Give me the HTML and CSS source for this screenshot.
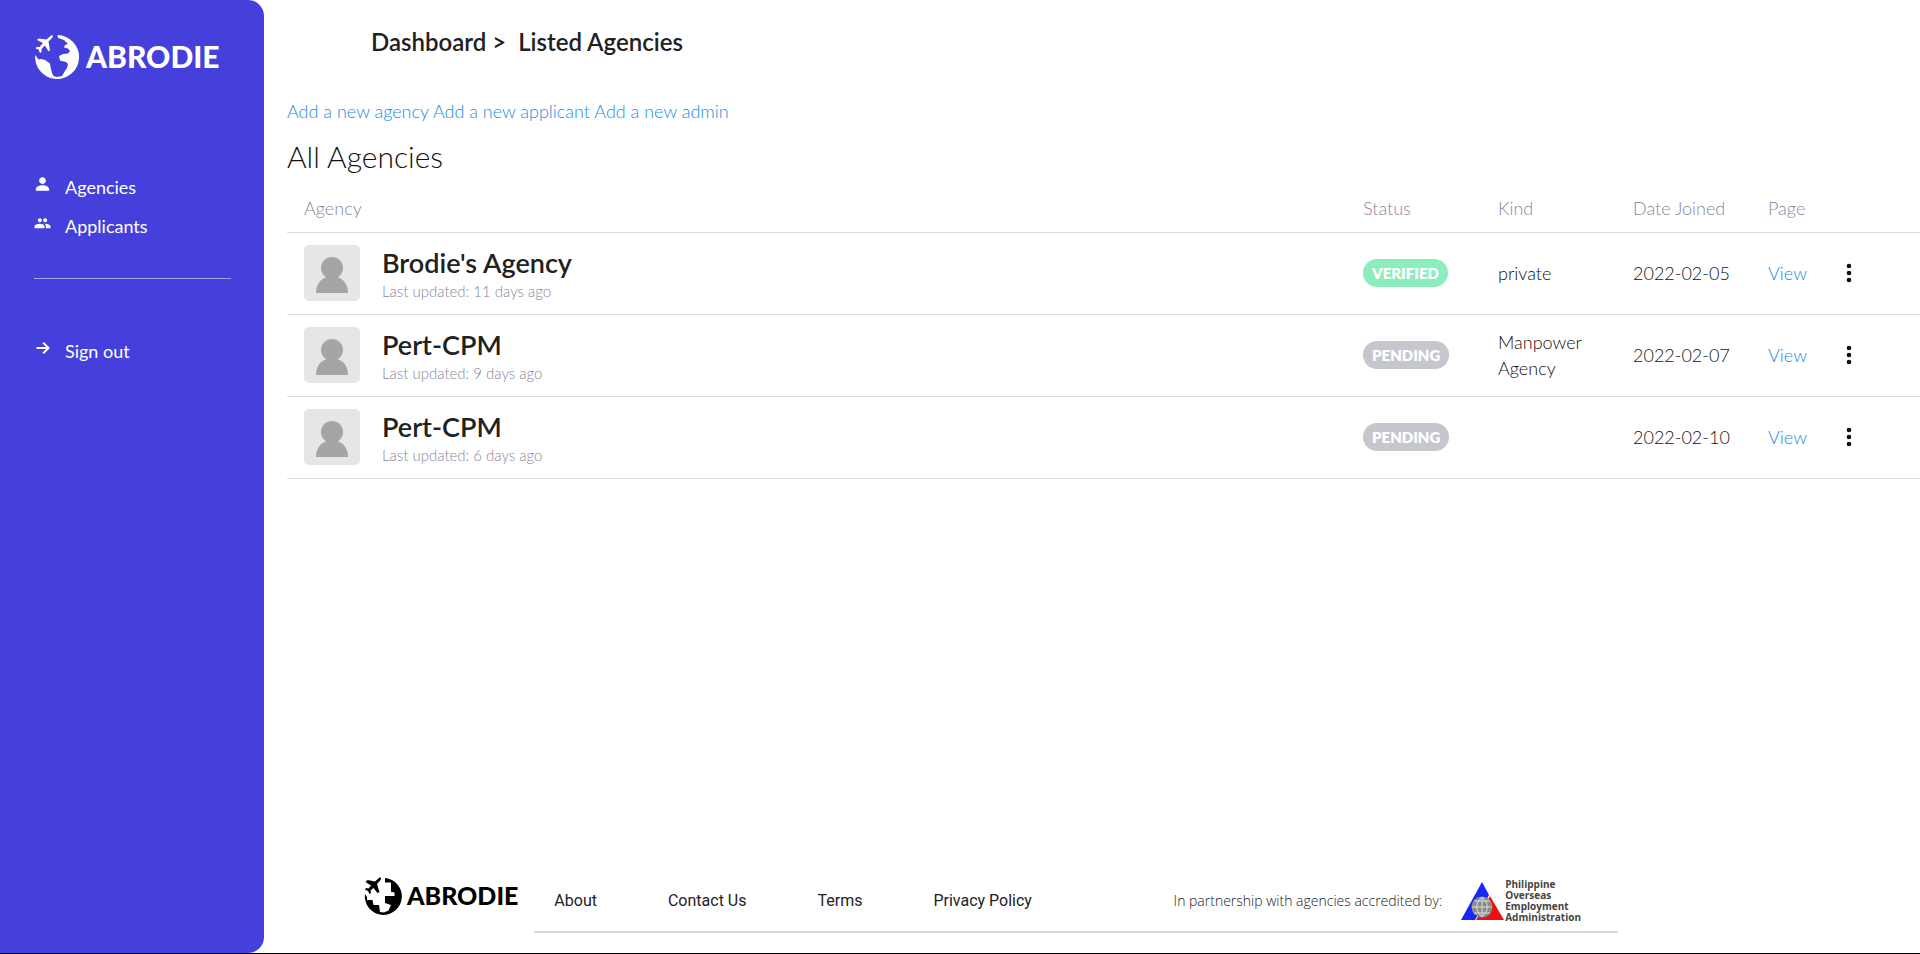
FILE: index.html
```html
<!DOCTYPE html>
<html lang="en">
<head>
<meta charset="utf-8">
<title>Abrodie – Listed Agencies</title>
<link rel="stylesheet" href="styles.css">
</head>
<body>
<svg class="defs" aria-hidden="true">
  <defs>
    <symbol id="globe" viewBox="0 0 46 46">
      <path d="M23.500 1A22 22 0 1 1 1.200 21L4.500 25.500L7 25L11 26L16 29.500L16.500 33L18 39L19.500 42L23 43L28 42L31 37L33 34L34 30L32 28L26 26.500L25 22L29 20L34 19.500L36 17L34 14.500L30 13.500L31 11L34 10L30 6L24 4Z"/>
      <path d="M17 1.500C18.500.5 19.500 2 18.500 3.500L14.500 7.500L16 16L14.500 17.500L11 11.500L7.500 15L7.500 18L6 19L4.500 15.500L1.500 14.500L2.500 13L5.500 13L9 9L3 6L4.500 4.500L12.500 5.500Z"/>
    </symbol>
    <symbol id="globe-block" viewBox="0 0 39 39">
      <path d="M21 1A18.500 18.500 0 1 1 1 17L3 20V23H8.500L9.500 28H15L16 35L20 35.500L24.500 33.500L27 28L21 26V19H30.500V15.500L27 14.700V5.500H21Z"/>
      <path d="M15.500.5C17 0 17.500 1.500 16.500 3L13 7L15.500 15L13.500 16L9.500 11L6.500 13.500L7 16L5.500 17L4 14L1 12.500L2 11L4.500 11.500L7 8.500L1.500 5L3.500 3L11 4.500Z"/>
    </symbol>
    <symbol id="person" viewBox="0 0 24 24"><path d="M12 12c2.760 0 5-2.240 5-5s-2.240-5-5-5-5 2.240-5 5 2.240 5 5 5zm0 2c-4 0-10 2-10 6v2h20v-2c0-4-6-6-10-6z"/></symbol>
    <symbol id="people" viewBox="0 0 24 24"><path d="M16 11c1.660 0 3-1.340 3-3s-1.340-3-3-3-3 1.340-3 3 1.340 3 3 3zm-8 0c1.660 0 3-1.340 3-3s-1.340-3-3-3-3 1.340-3 3 1.340 3 3 3zm0 2c-2.700 0-8 1.300-8 4v3h15v-3c0-2.700-4.600-4-7-4zm8 0c-.3 0-.6 0-1 .1 1.200.8 2 2 2 3.900v3h7v-3c0-2.700-5.300-4-8-4z"/></symbol>
    <symbol id="arrow" viewBox="0 0 24 24"><path d="M3 12h17M13 4l8 8-8 8" fill="none" stroke="currentColor" stroke-width="3"/></symbol>
    <symbol id="avatar" viewBox="0 0 56 56"><circle cx="28" cy="23" r="11"/><path d="M12 48c0-8 4-14 11-16h10c7 2 11 8 11 16z"/></symbol>
    <symbol id="dots" viewBox="0 0 6 20"><circle cx="3" cy="3" r="2.300"/><circle cx="3" cy="10" r="2.300"/><circle cx="3" cy="17" r="2.300"/></symbol>
  </defs>
</svg>
<div class="layout">
  <aside class="sidebar">
    <a class="brand" href="#"><svg class="brand-mark"><use href="#globe"/></svg><span>ABRODIE</span></a>
    <nav class="menu">
      <a href="#"><svg class="menu-icon"><use href="#person"/></svg>Agencies</a>
      <a href="#"><svg class="menu-icon"><use href="#people"/></svg>Applicants</a>
    </nav>
    <hr class="divider">
    <nav class="menu">
      <a href="#"><svg class="menu-icon"><use href="#arrow"/></svg>Sign out</a>
    </nav>
  </aside>
  <div class="page">
    <header class="crumbs"><span>Dashboard &gt;</span><span>Listed Agencies</span></header>
    <main class="content">
      <div class="actions"><a href="#">Add a new agency</a> <a href="#">Add a new applicant</a> <a href="#">Add a new admin</a></div>
      <h1 class="title">All Agencies</h1>
      <table class="agencies">
        <thead><tr><th>Agency</th><th class="col">Status</th><th class="col">Kind</th><th class="col">Date Joined</th><th class="col-page">Page</th><th class="col-more"></th></tr></thead>
        <tbody>
          <tr>
            <td><div class="agency"><svg class="avatar"><use href="#avatar"/></svg><div><div class="name">Brodie's Agency</div><div class="updated">Last updated: 11 days ago</div></div></div></td>
            <td><span class="badge verified">VERIFIED</span></td><td>private</td><td>2022-02-05</td><td><a href="#">View</a></td>
            <td><button class="more" aria-label="More options"><svg><use href="#dots"/></svg></button></td>
          </tr>
          <tr>
            <td><div class="agency"><svg class="avatar"><use href="#avatar"/></svg><div><div class="name">Pert-CPM</div><div class="updated">Last updated: 9 days ago</div></div></div></td>
            <td><span class="badge">PENDING</span></td><td>Manpower Agency</td><td>2022-02-07</td><td><a href="#">View</a></td>
            <td><button class="more" aria-label="More options"><svg><use href="#dots"/></svg></button></td>
          </tr>
          <tr>
            <td><div class="agency"><svg class="avatar"><use href="#avatar"/></svg><div><div class="name">Pert-CPM</div><div class="updated">Last updated: 6 days ago</div></div></div></td>
            <td><span class="badge">PENDING</span></td><td></td><td>2022-02-10</td><td><a href="#">View</a></td>
            <td><button class="more" aria-label="More options"><svg><use href="#dots"/></svg></button></td>
          </tr>
        </tbody>
      </table>
    </main>
    <footer class="footer">
      <a class="brand brand-dark" href="#"><svg class="brand-mark"><use href="#globe-block"/></svg><span>ABRODIE</span></a>
      <div class="footer-bar">
        <nav class="footer-links"><a href="#">About</a><a href="#">Contact Us</a><a href="#">Terms</a><a href="#">Privacy Policy</a></nav>
        <div class="partner">
          <span>In partnership with agencies accredited by:</span>
          <div class="poea">
            <svg viewBox="0 0 44 40"><path class="blue" d="M22 1L29 14L15 39H1Z"/><path class="red" d="M30 15L44 39H16Z"/><circle class="ball" cx="22" cy="26" r="10.500"/><path class="grid" d="M12 26h20M14 20h16M14 32h16M22 16v20M22 16c-7 6-7 14 0 20M22 16c7 6 7 14 0 20"/></svg>
            <div class="poea-name"><span>Philippine</span><span>Overseas</span><span>Employment</span><span>Administration</span></div>
          </div>
        </div>
      </div>
    </footer>
  </div>
</div>
</body>
</html>
```
FILE: styles.css
```css
* { box-sizing: border-box; }
body { margin: 0; background: #fff; color: #111; font: 300 18px/26px Lato, sans-serif; }
a { color: #228ce4; text-decoration: none; }
.defs { position: absolute; width: 0; height: 0; }
.layout { display: flex; min-height: 100vh; border-bottom: 1px solid #000; }
.sidebar { width: 264px; flex: none; padding: 34px 33px 0 34px; background: #4540db; border-radius: 0 16px 16px 0; color: #fff; }
.brand { display: flex; align-items: center; gap: 6px; color: #fff; font: 900 30px/44px Lato, sans-serif; }
.brand span { padding-bottom: 2px; }
.brand-mark { width: 46px; height: 46px; fill: currentColor; flex: none; }
.menu { display: flex; flex-direction: column; gap: 13px; }
.brand + .menu { margin-top: 94px; }
.menu a { display: flex; gap: 14px; color: #fff; font-weight: 400; }
.menu-icon { width: 17px; height: 16px; margin-top: 2px; fill: currentColor; }
.divider { margin: 39px 0 59px; border: 0; border-top: 1px solid #a9a6dd; }
.page { flex: 1; min-width: 0; display: flex; flex-direction: column; }
.crumbs { display: flex; gap: 12px; padding: 28px 0 0 107px; font-size: 24px; line-height: 28px; font-weight: 600; color: #212121; }
.content { flex: 1; padding: 42px 0 0 23px; }
.title { margin: 14px 0 11px; font-size: 30px; line-height: 36px; font-weight: 300; }
.agencies { width: 100%; table-layout: fixed; border-collapse: collapse; }
.agencies th { height: 47px; padding: 0 17px; text-align: left; font-weight: 300; color: #8886a0; }
.agencies td { height: 82px; padding: 0 17px; }
.agencies tr { border-bottom: 1px solid #ddd; }
.agencies .col { width: 135px; }
.agencies .col-page { width: 78px; }
.agencies .col-more { width: 91px; }
.agency { display: flex; gap: 22px; align-items: center; }
.avatar { width: 56px; height: 56px; border-radius: 5px; background: #e6e6e6; fill: #a5a5a5; }
.name { padding-top: 2px; font-size: 27px; line-height: 34px; font-weight: 600; color: #212121; }
.updated { font-size: 15px; line-height: 22px; color: #8886a0; }
.badge { display: inline-block; padding: 0 9px; border-radius: 14px; background: #c6c6cd; color: #fff; font-size: 15px; line-height: 28px; font-weight: 800; }
.verified { background: #8ceebf; }
.more { display: block; padding: 0; border: 0; background: none; color: #111; }
.more svg { display: block; width: 6px; height: 20px; fill: currentColor; }
.footer { display: flex; gap: 16px; padding: 0 302px 20px 100px; }
.brand-dark { color: #000; font-size: 25px; line-height: 38px; gap: 4px; align-self: flex-start; }
.brand-dark .brand-mark { width: 39px; height: 39px; }
.footer-bar { flex: 1; display: flex; justify-content: space-between; align-items: center; padding: 3px 37px 8px 20px; border-bottom: 2px solid #d8d8d8; }
.footer-links { display: flex; gap: 71px; font: 400 16px/24px Roboto, sans-serif; }
.footer-links a { color: #222; }
.partner { display: flex; align-items: center; gap: 18px; font: 300 14px/24px "Open Sans", sans-serif; color: #222; }
.poea { display: flex; align-items: center; gap: 1px; color: #444; font: 700 10px/11px "Open Sans", sans-serif; }
.poea-name { display: flex; flex-direction: column; }
.poea svg { width: 44px; height: 40px; }
.blue { fill: #1628f5; }
.red { fill: #ee1010; }
.ball { fill: #8b8b8b; }
.grid { fill: none; stroke: #ddd; stroke-width: 1; }
```
